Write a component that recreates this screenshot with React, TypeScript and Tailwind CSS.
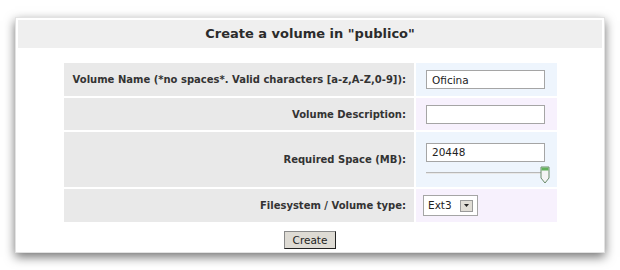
import React from "react";

const labelCls =
  "bg-[#e9e9e9] flex items-center justify-end pr-[8px] text-[10px] font-bold text-[#333]";

const inputCls =
  "w-[119px] h-[19px] border border-[#a5a5a5] bg-white px-[5px] text-[10.5px] text-[#222] outline-none";

export default function App() {
  return (
    <div
      className="w-[620px] h-[270px] bg-white pt-[17px] pl-[15px]"
      style={{ fontFamily: "'DejaVu Sans', Verdana, sans-serif" }}
    >
      <div className="w-[590px] h-[236px] bg-white border border-[#e2e2e2] shadow-[0_4px_10px_rgba(0,0,0,0.55)] p-[2px] flex flex-col">
        <div className="h-[28px] bg-[#efefef] flex items-center justify-center text-[13px] font-bold text-[#2b2b2b]">
          Create a volume in "publico"
        </div>

        <div className="ml-[46px] mt-[15px] w-[493px] grid grid-cols-[350px_141px] gap-[2px] grid-rows-[33px_32px_55px_33px]">
          <div className={labelCls}>Volume Name (*no spaces*. Valid characters [a-z,A-Z,0-9]):</div>
          <div className="bg-[#eef5fd] flex items-center pl-[10px]">
            <input className={inputCls} defaultValue="Oficina" />
          </div>

          <div className={labelCls}>Volume Description:</div>
          <div className="bg-[#f7f1fd] flex items-center pl-[10px]">
            <input className={inputCls} defaultValue="" />
          </div>

          <div className={labelCls}>Required Space (MB):</div>
          <div className="bg-[#eef5fd] pl-[10px] pt-[7px]">
            <input className={inputCls} defaultValue="20448" />
            <div className="relative mt-[3px] w-[124px] h-[17px]">
              <div className="absolute left-0 top-[6px] w-[117px] h-[2px] bg-[#b8b8b8] border-b border-[#e8e8e8]" />
              <svg className="absolute left-[114px] top-0" width="10" height="18" viewBox="0 0 10 18">
                <path d="M1 1 H9 V12 L5 17 L1 12 Z" fill="#f4f4f4" stroke="#6a8a6a" strokeWidth="1" />
                <rect x="1.5" y="1.5" width="7" height="3" fill="#5fb05a" />
              </svg>
            </div>
          </div>

          <div className={labelCls}>Filesystem / Volume type:</div>
          <div className="bg-[#f7f1fd] flex items-center pl-[7px]">
            <div className="w-[55px] h-[21px] border border-[#a5a5a5] bg-white flex items-center justify-between pl-[4px] pr-[4px]">
              <span className="text-[10.5px] text-[#222]">Ext3</span>
              <span className="w-[13px] h-[12px] bg-[#e0ddd6] border border-[#9a9a9a] flex items-center justify-center">
                <svg width="5" height="3" viewBox="0 0 5 3">
                  <path d="M0 0 H5 L2.5 3 Z" fill="#222" />
                </svg>
              </span>
            </div>
          </div>
        </div>

        <div className="flex justify-center mt-[9px]">
          <button className="w-[52px] h-[18px] bg-[#dedbd4] border border-[#555] border-t-[#8a8a8a] border-l-[#8a8a8a] border-r-[#222] border-b-[#222] text-[10.5px] text-[#222] leading-none">
            Create
          </button>
        </div>
      </div>
    </div>
  );
}
